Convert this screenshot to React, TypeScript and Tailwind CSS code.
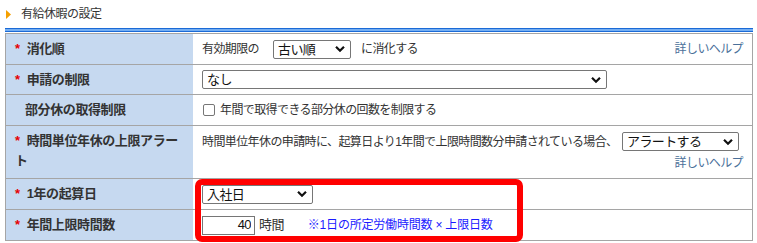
import type { ReactNode } from "react";

function Chevron() {
  return (
    <svg width="10" height="7" viewBox="0 0 10 7" className="pointer-events-none absolute right-[6px] top-1/2 -translate-y-1/2">
      <path d="M1 1.2 L5 5.2 L9 1.2" fill="none" stroke="#111" strokeWidth="2.2" />
    </svg>
  );
}

function Select({ value, className }: { value: string; className: string }) {
  return (
    <div className={`relative h-[19px] ${className}`}>
      <select
        defaultValue={value}
        className="h-full w-full appearance-none rounded-[2px] border border-[#767676] bg-white pl-[4px] text-[13px] leading-[17px] text-[#111]"
      >
        <option>{value}</option>
      </select>
      <Chevron />
    </div>
  );
}

function Help() {
  return <span className="text-[12px] tracking-[-0.6px] text-[#4a6f99]">詳しいヘルプ</span>;
}

function Row({ label, required = true, h, children, last = false, top = false }: {
  label: string; required?: boolean; h: string; children: ReactNode; last?: boolean; top?: boolean;
}) {
  return (
    <div className={`flex ${h} ${last ? "" : "border-b border-[#a5a5a5]"}`}>
      <div
        className={`w-[187px] shrink-0 bg-[#c6d9f0] pr-[6px] text-[13px] font-bold leading-[20px] tracking-[-0.4px] text-[#333] ${
          required ? "pl-[9px]" : "pl-[19px]"
        } ${top ? "pt-[5px]" : "flex items-center"}`}
      >
        <p>
          {required && <span className="mr-[7px] text-[#e60000]">*</span>}
          {label}
        </p>
      </div>
      <div className="flex-1 pl-[9px] pr-[9px] text-[12px] tracking-[-0.6px] text-[#333]">{children}</div>
    </div>
  );
}

export default function App() {
  return (
    <div className="relative h-[243px] w-[757px] overflow-hidden bg-white font-['Liberation_Sans','Noto_Sans_CJK_JP',sans-serif]">
      <div className="flex h-[28px] items-center gap-[10px] pl-[6px] text-[12px] tracking-[-0.5px] text-[#333]">
        <svg width="5" height="9" viewBox="0 0 5 9">
          <polygon points="0,0 5,4.5 0,9" fill="#f5a000" />
        </svg>
        <span>有給休暇の設定</span>
      </div>
      <div className="ml-[5px] h-[4px] w-[748px] border-y border-[#1b6ad6] bg-[#74aef2]" />
      <div className="ml-[5px] mt-[1px] w-[748px] border border-[#a5a5a5]">
        <Row label="消化順" h="h-[31px]">
          <div className="flex h-full items-center">
            <span>有効期限の</span>
            <Select value="古い順" className="ml-[14px] w-[78px]" />
            <span className="ml-[10px]">に消化する</span>
            <span className="ml-auto"><Help /></span>
          </div>
        </Row>
        <Row label="申請の制限" h="h-[30px]">
          <div className="flex h-full items-center">
            <Select value="なし" className="w-[405px]" />
          </div>
        </Row>
        <Row label="部分休の取得制限" required={false} h="h-[31px]">
          <div className="flex h-full items-center">
            <input type="checkbox" className="ml-[1px] h-[12px] w-[12px] appearance-none rounded-[2px] border border-[#767676] bg-white" />
            <span className="ml-[5px]">年間で取得できる部分休の回数を制限する</span>
          </div>
        </Row>
        <Row label="時間単位年休の上限アラート" h="h-[53px]" top>
          <div className="flex flex-col pt-[6px]">
            <div className="flex items-center whitespace-nowrap">
              <span className="tracking-[-0.6px]">時間単位年休の申請時に、起算日より1年間で上限時間数分申請されている場合、</span>
              <Select value="アラートする" className="ml-auto mr-[4px] w-[117px]" />
            </div>
            <div className="mt-[3px] text-right leading-[18px]"><Help /></div>
          </div>
        </Row>
        <Row label="1年の起算日" h="h-[31px]">
          <div className="flex h-full items-center">
            <Select value="入社日" className="w-[111px]" />
          </div>
        </Row>
        <Row label="年間上限時間数" h="h-[30px]" last>
          <div className="flex h-full items-center">
            <input
              type="text"
              defaultValue="40"
              className="h-[19px] w-[53px] border border-[#767676] bg-white pr-[3px] text-right text-[13px] text-[#111]"
            />
            <span className="ml-[4px] text-[13px]">時間</span>
            <span className="ml-[24px] tracking-[-0.2px] text-[#1a1aff]">※1日の所定労働時間数 × 上限日数</span>
          </div>
        </Row>
      </div>
      <div className="pointer-events-none absolute left-[195px] top-[179px] h-[63px] w-[328px] rounded-[7px] border-[6px] border-[#ff0000]" />
    </div>
  );
}
